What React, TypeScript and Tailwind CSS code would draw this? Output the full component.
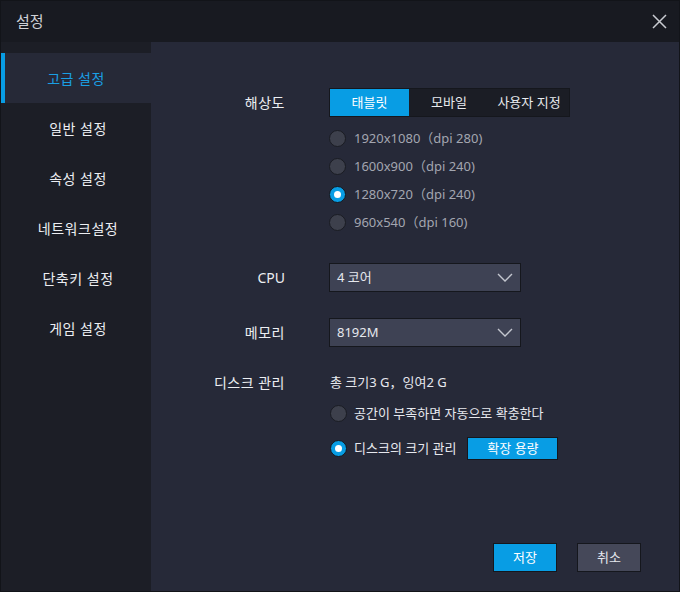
import React from "react";

const font = { fontFamily: '"Noto Sans", "Noto Sans CJK KR", sans-serif' };

function Radio({ checked }: { checked?: boolean }) {
  return checked ? (
    <span className="flex h-[17px] w-[17px] shrink-0 items-center justify-center rounded-full border border-[#15171d] bg-[#089de4]">
      <span className="h-[7px] w-[7px] rounded-full bg-white" />
    </span>
  ) : (
    <span className="h-[17px] w-[17px] shrink-0 rounded-full border border-[#1a1c23] bg-[#3d404c]" />
  );
}

function Chevron() {
  return (
    <svg width="16" height="9" viewBox="0 0 16 9" fill="none">
      <path d="M1 1 L8 8 L15 1" stroke="#c3c6cf" strokeWidth="1.4" />
    </svg>
  );
}

function Select({ value }: { value: string }) {
  return (
    <div className="flex h-[29px] w-[192px] items-center justify-between border border-[#15171d] bg-[#3e4254] pl-[7px] pr-[7px]">
      <span className="text-[13px] text-[#e6e8ee]">{value}</span>
      <Chevron />
    </div>
  );
}

const menu = ["고급 설정", "일반 설정", "속성 설정", "네트워크설정", "단축키 설정", "게임 설정"];

export default function App() {
  return (
    <div className="flex h-[592px] w-[680px] flex-col border border-[#121419] bg-[#181a21]" style={font}>
      <div className="flex h-[41px] shrink-0 items-center justify-between pl-[15px] pr-[12px]">
        <span className="text-[15px] text-[#cfd1d6]">설정</span>
        <svg width="15" height="15" viewBox="0 0 15 15">
          <path d="M1 1 L14 14 M14 1 L1 14" stroke="#c9cbd1" strokeWidth="1.5" />
        </svg>
      </div>
      <div className="flex min-h-0 flex-1">
        <div className="w-[150px] shrink-0 bg-[#1c1e26] pt-[11px]">
          {menu.map((m, i) =>
            i === 0 ? (
              <div key={m} className="flex h-[50px] items-center bg-[#262937]">
                <span className="h-full w-[4px] bg-[#089de4]" />
                <span className="flex-1 pr-[4px] text-center text-[14px] tracking-[0.5px] text-[#1a9fe4]">{m}</span>
              </div>
            ) : (
              <div key={m} className="flex h-[50px] items-center justify-center pl-[4px] text-[14px] tracking-[0.5px] text-[#eceef2]">
                {m}
              </div>
            )
          )}
        </div>
        <div className="relative flex flex-1 flex-col bg-[#262938] pt-[46px]">
          <div className="flex">
            <div className="w-[134px] shrink-0 pt-[4px] text-right text-[14px] tracking-[0.5px] text-[#eceef2]">해상도</div>
            <div className="ml-[44px] flex flex-col">
              <div className="flex h-[29px] w-[241px] border border-[#15171d] bg-[#1b1d25] text-[13px]">
                <div className="flex w-[79px] items-center justify-center bg-[#089de4] text-white">태블릿</div>
                <div className="flex w-[80px] items-center justify-center text-[#e8eaee]">모바일</div>
                <div className="flex flex-1 items-center justify-center text-[#e8eaee]">사용자 지정</div>
              </div>
              <div className="mt-[13px] flex flex-col gap-[11px] text-[13px] text-[#a3a6b0]">
                <div className="flex h-[17px] items-center gap-[8px]"><Radio /><span>1920x1080（dpi 280)</span></div>
                <div className="flex h-[17px] items-center gap-[8px]"><Radio /><span>1600x900（dpi 240)</span></div>
                <div className="flex h-[17px] items-center gap-[8px]"><Radio checked /><span>1280x720（dpi 240)</span></div>
                <div className="flex h-[17px] items-center gap-[8px]"><Radio /><span>960x540（dpi 160)</span></div>
              </div>
            </div>
          </div>
          <div className="mt-[32px] flex items-center">
            <div className="w-[134px] shrink-0 text-right text-[14px] text-[#eceef2]">CPU</div>
            <div className="ml-[44px]"><Select value="4 코어" /></div>
          </div>
          <div className="mt-[26px] flex items-center">
            <div className="w-[134px] shrink-0 text-right text-[14px] tracking-[0.5px] text-[#eceef2]">메모리</div>
            <div className="ml-[44px]"><Select value="8192M" /></div>
          </div>
          <div className="mt-[25px] flex">
            <div className="w-[134px] shrink-0 text-right text-[14px] tracking-[0.5px] text-[#eceef2]">디스크 관리</div>
            <div className="ml-[45px] flex flex-col text-[13px] text-[#e6e8ee]">
              <div className="h-[21px] leading-[21px]">총 크기3 G，잉여2 G</div>
              <div className="mt-[12px] flex h-[17px] items-center gap-[7px]"><Radio /><span>공간이 부족하면 자동으로 확충한다</span></div>
              <div className="mt-[15px] flex items-center gap-[7px]">
                <Radio checked />
                <span>디스크의 크기 관리</span>
                <span className="ml-[4px] flex h-[23px] w-[91px] items-center justify-center border border-[#15171d] bg-[#089de4] text-white">확장 용량</span>
              </div>
            </div>
          </div>
          <div className="mt-auto mb-[19px] flex justify-end gap-[20px] pr-[38px] text-[13px]">
            <div className="flex h-[29px] w-[64px] items-center justify-center border border-[#15171d] bg-[#089de4] text-white">저장</div>
            <div className="flex h-[29px] w-[64px] items-center justify-center border border-[#15171d] bg-[#454859] text-[#e6e8ee]">취소</div>
          </div>
        </div>
      </div>
    </div>
  );
}
